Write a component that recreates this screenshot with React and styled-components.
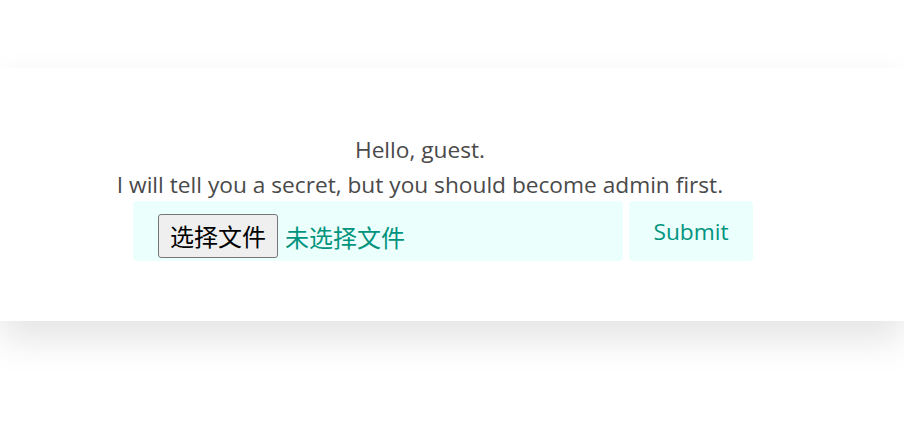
import styled, { createGlobalStyle } from "styled-components";

const GlobalStyle = createGlobalStyle`
  html, body {
    margin: 0;
    padding: 0;
    background: #ffffff;
  }
  body {
    font-family: "Open Sans", "Noto Sans CJK SC", sans-serif;
    color: #4a4a4a;
  }
`;

const Page = styled.div`
  padding-top: 68px;
  min-height: 421px;
  box-sizing: border-box;
`;

const Card = styled.section`
  background: #ffffff;
  box-shadow: 0 18px 36px rgba(0, 0, 0, 0.11);
  padding: 67px 0 60px;
`;

const Content = styled.div`
  width: 640px;
  margin-left: 100px;
  display: flex;
  flex-direction: column;
  align-items: center;
`;

const Line = styled.p`
  margin: 0 0 ${(p) => (p.$gap ? "5px" : "0")};
  font-size: 22.7px;
  line-height: 30px;
  white-space: nowrap;
`;

const Form = styled.form`
  display: flex;
  gap: 6px;
  width: 620px;
  margin-left: 133px;
  margin-top: 1px;
`;

const FileField = styled.label`
  flex: 1;
  height: 60px;
  box-sizing: border-box;
  background: #ebfffc;
  border-radius: 4px;
  display: flex;
  align-items: center;
  gap: 7px;
  padding: 10px 0 0 25px;
  font-family: "Noto Sans CJK SC", sans-serif;
  font-size: 24px;
  color: #00947e;
`;

const PickButton = styled.span`
  box-sizing: border-box;
  height: 44px;
  padding: 0 11px;
  display: flex;
  align-items: center;
  background: #efefef;
  border: 1px solid #767676;
  border-radius: 3px;
  color: #000000;
  line-height: 1;
`;

const SubmitButton = styled.button`
  width: 124px;
  height: 60px;
  border: none;
  border-radius: 4px;
  background: #ebfffc;
  color: #00947e;
  font-family: "Open Sans", sans-serif;
  font-size: 22.7px;
  cursor: pointer;
`;

export default function App() {
  return (
    <>
      <GlobalStyle />
      <Page>
        <Card>
          <Content>
            <Line $gap>Hello, guest.</Line>
            <Line>I will tell you a secret, but you should become admin first.</Line>
          </Content>
          <Form onSubmit={(e) => e.preventDefault()}>
            <FileField>
              <PickButton>选择文件</PickButton>
              <span>未选择文件</span>
            </FileField>
            <SubmitButton type="submit">Submit</SubmitButton>
          </Form>
        </Card>
      </Page>
    </>
  );
}
